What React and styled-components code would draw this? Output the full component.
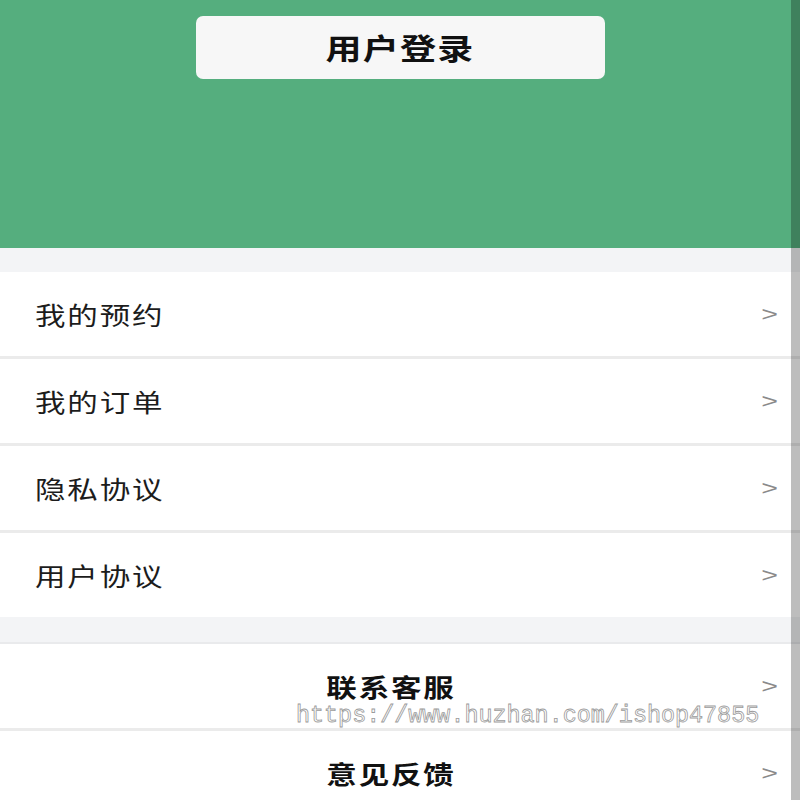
import React from 'react';
import styled, { createGlobalStyle } from 'styled-components';

const GlobalStyle = createGlobalStyle`
  html, body {
    margin: 0;
    padding: 0;
    background: #f3f4f6;
    font-family: 'Noto Sans CJK SC', 'Noto Sans', sans-serif;
    color: #1a1a1a;
  }
  * { box-sizing: border-box; }
`;

const menuTop = ['我的预约', '我的订单', '隐私协议', '用户协议'];
const menuBottom = ['联系客服', '意见反馈'];

const App = () => (
  <>
    <GlobalStyle />
    <Page>
      <Header>
        <LoginButton>
          <LoginText>用户登录</LoginText>
        </LoginButton>
      </Header>

      <Group>
        {menuTop.map((label) => (
          <Row key={label}>
            <Label>{label}</Label>
            <Chevron>&gt;</Chevron>
          </Row>
        ))}
      </Group>

      <Group $topLine>
        {menuBottom.map((label) => (
          <Row key={label} $center>
            <Label $bold>{label}</Label>
            <Chevron>&gt;</Chevron>
          </Row>
        ))}
      </Group>

      <Watermark>https://www.huzhan.com/ishop47855</Watermark>
      <ScrollTrack />
    </Page>
  </>
);

/* --- styles --- */
const Page = styled.div`
  position: relative;
  width: 800px;
  height: 800px;
  overflow: hidden;
  background: #f3f4f6;
  display: flex;
  flex-direction: column;
  & > * { flex-shrink: 0; }
`;

const Header = styled.div`
  height: 248px;
  background: #55ae7e;
  padding-top: 16px;
  display: flex;
  justify-content: center;
  align-items: flex-start;
  margin-bottom: 24px;
`;

const LoginButton = styled.div`
  width: 409px;
  height: 63px;
  background: #f7f7f7;
  border-radius: 7px;
  display: flex;
  align-items: center;
  justify-content: center;
`;

const LoginText = styled.span`
  display: inline-block;
  font-size: 29px;
  font-weight: 700;
  letter-spacing: 1px;
  color: #111;
  transform: scaleX(1.24);
  margin-top: -2px;
`;

const Group = styled.div`
  display: flex;
  flex-direction: column;
  gap: 3px;
  background: #ebebeb;
  margin-bottom: 25px;
  border-top: ${(p) => (p.$topLine ? '2px solid #e9eaec' : 'none')};
`;

const Row = styled.div`
  position: relative;
  height: 84px;
  background: #fff;
  display: flex;
  align-items: center;
  justify-content: ${(p) => (p.$center ? 'center' : 'flex-start')};
  padding-left: ${(p) => (p.$center ? '0' : '35px')};
`;

const Label = styled.span`
  display: inline-block;
  font-size: 25px;
  font-weight: ${(p) => (p.$bold ? 700 : 400)};
  letter-spacing: 1.5px;
  color: ${(p) => (p.$bold ? '#111' : '#1c1c1c')};
  transform: scaleX(1.22);
  transform-origin: ${(p) => (p.$bold ? 'center' : 'left')};
  margin-right: ${(p) => (p.$bold ? '18px' : '0')};
`;

const Chevron = styled.span`
  position: absolute;
  right: 23px;
  top: 50%;
  transform: translateY(-50%) scale(1.1, 0.75);
  font-family: 'Liberation Sans', sans-serif;
  font-size: 26px;
  line-height: 1;
  color: #8a8a8a;
`;

const Watermark = styled.div`
  position: absolute;
  left: 296px;
  top: 703px;
  font-family: 'Liberation Mono', monospace;
  font-size: 23.4px;
  color: transparent;
  -webkit-text-stroke: 0.8px #9a9a9a;
  white-space: nowrap;
  pointer-events: none;
`;

const ScrollTrack = styled.div`
  position: absolute;
  top: 0;
  right: 0;
  width: 9px;
  height: 100%;
  background: rgba(0, 0, 0, 0.26);
`;

export default App;
